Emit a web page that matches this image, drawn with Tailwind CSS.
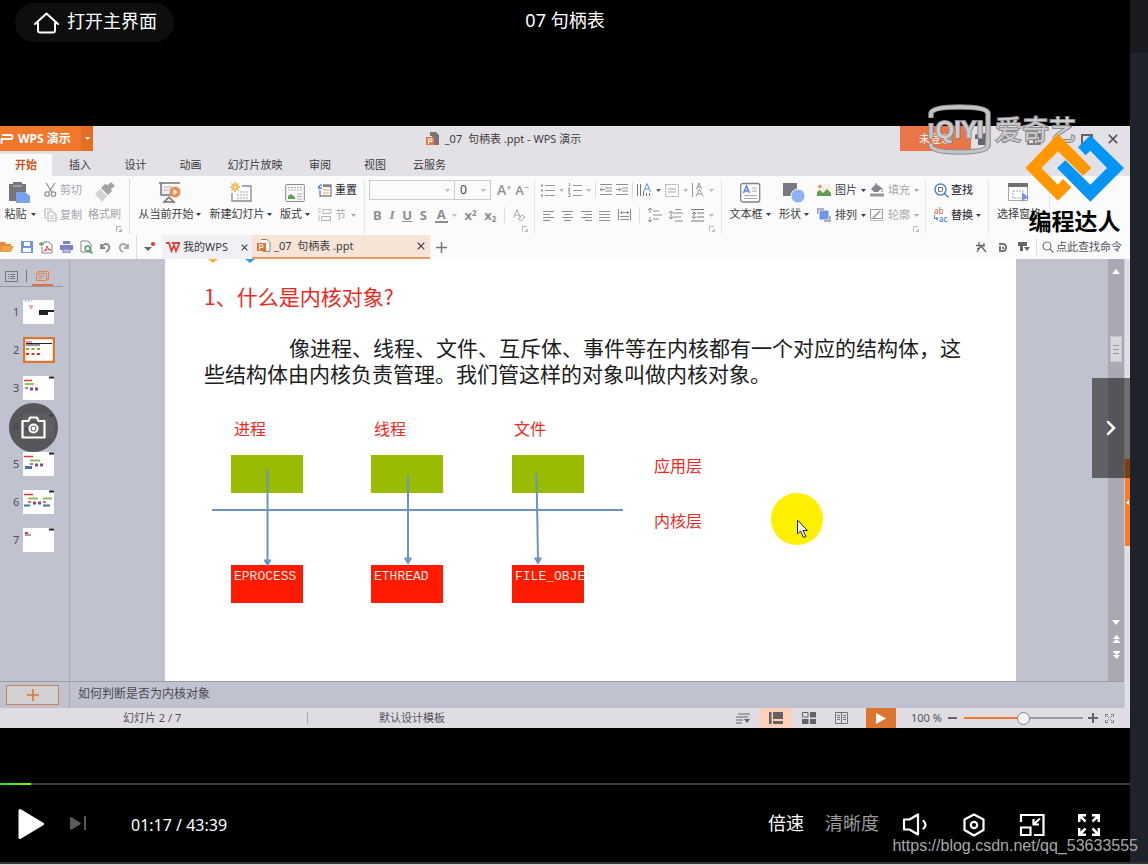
<!DOCTYPE html>
<html lang="zh-CN">
<head>
<meta charset="utf-8">
<meta name="viewport" content="width=device-width, initial-scale=1">
<title>07 句柄表</title>
<script src="https://cdn.jsdelivr.net/npm/@tailwindcss/browser@4"></script>
</head>
<body class="flex min-h-screen flex-col bg-black font-['Noto_Sans','Noto_Sans_CJK_SC',sans-serif]">
<svg width="0" height="0" class="hidden">
  <symbol id="caret" viewBox="0 0 5 3"><path d="M0 0h5L2.5 3z" fill="currentColor"/></symbol>
  <symbol id="launch" viewBox="0 0 6 6"><path d="M.5 5.500V.5H5M3 5.500h2.500V3z" fill="none" stroke="currentColor"/></symbol>
  <symbol id="close" viewBox="0 0 8 8"><path d="M.7.7l6.600 6.600M7.300.7L.7 7.300" fill="none" stroke="currentColor" stroke-width="1.200"/></symbol>
  <symbol id="ppt" viewBox="0 0 14 14"><path d="M4 .5h6l3 3v9H6" fill="#fff" stroke="#8a8580"/><rect x="0" y="4" width="9" height="8" fill="#e2733b"/><path d="M2.500 11V5.800h3.300v2.700H3" fill="none" stroke="#fff"/></symbol>
</svg>

<div class="flex flex-1">
<main class="relative flex min-w-0 flex-1 flex-col bg-black text-white">

  <!-- player header -->
  <header class="relative flex h-[126px] items-start justify-center">
    <button class="absolute left-[15px] top-[3px] flex h-[39px] items-center gap-2 rounded-full bg-[#0e0e0e] pl-[19px] pr-[17px] text-[18px] leading-6">
      <svg width="25" height="22" viewBox="0 0 25 22" class="mt-px" fill="none" stroke="#fff" stroke-width="2" stroke-linejoin="round" stroke-linecap="round"><path d="M1 12L12.500 1.500 24 12M4 11v7.500a2 2 0 0 0 2 2h13a2 2 0 0 0 2-2V11"/></svg>
      <span class="-mt-1">打开主界面</span>
    </button>
    <h1 class="mt-2 text-[18px] leading-6">07 句柄表</h1>
  </header>

  <!-- recorded WPS window -->
  <section class="flex h-[602px] flex-col overflow-hidden bg-[#e3e1e6] text-[11px] leading-4 text-[#3c3c40]">
    <div class="relative flex h-[25px] items-center">
      <button class="flex h-[25px] w-[93px] items-center bg-[#f0772c] text-[12px] font-bold text-white">
        <svg width="14" height="10" viewBox="0 0 14 10" fill="none" stroke="#fff" stroke-width="1.800"><path d="M2 1h8.500q2 0 2 2t-2 2H1.500v5"/></svg>
        <span class="ml-1 w-[63px] text-left">WPS 演示</span>
        <span class="flex h-[25px] w-3 items-center justify-center bg-[#e36f24]"><svg width="5" height="3"><use href="#caret"/></svg></span>
      </button>
      <div class="flex flex-1 items-center justify-center gap-[5px] pr-[10px]"><span class="w-[19px]"></span>
        <svg width="14" height="14" viewBox="0 0 14 14"><path d="M4 0h6l3 3v10H6V4H4z" fill="#77747a"/><rect y="5" width="8" height="8" fill="#ee7b45"/><path d="M2.500 12V7h3.300v2.500H3" fill="none" stroke="#fff"/></svg>
        <span class="whitespace-pre">_07  句柄表 .ppt - WPS 演示</span>
      </div>
      <div class="flex h-full w-[230px] items-center">
        <button class="h-full w-[71px] bg-[#ec7449] pl-[19px] text-left text-white">未登录</button>
        <div class="flex flex-1 items-center justify-between pl-1 pr-3 text-[#66636a]">
          <svg width="13" height="12" viewBox="0 0 13 12"><path d="M4 0L0 2v4h3v6h7V6h3V2L9 0 6.500 2z" fill="#66636a"/></svg>
          <svg width="10" height="10" viewBox="0 0 10 10" fill="none" stroke="#66636a" stroke-width="1.500"><path d="M2 1v8M2 3l6 2-6 2"/></svg>
          <svg width="14" height="12" viewBox="0 0 14 12" fill="none" stroke="#66636a" stroke-width="1.500"><path d="M1 1h12v10H1zM1 3h12M7 10V5M4.500 7L7 5l2.500 2"/></svg>
          <svg width="11" height="10" viewBox="0 0 11 10" stroke="#66636a" stroke-width="1.500"><path d="M0 8h11"/></svg>
          <svg width="12" height="10" viewBox="0 0 12 10" fill="none" stroke="#66636a" stroke-width="2"><path d="M1 1h10v8H1z"/></svg>
          <svg width="10" height="10" class="text-[#55535a]"><use href="#close"/></svg>
        </div>
      </div>
    </div>

    <nav class="flex h-[25px] items-end text-center leading-[22px]">
      <button class="w-[52px] bg-[#fbfbfc] font-bold text-[#c8561c]">开始</button>
      <button class="w-[56px]">插入</button>
      <button class="w-[55px]">设计</button>
      <button class="w-[55px]">动画</button>
      <button class="w-[74px]">幻灯片放映</button>
      <button class="w-[56px]">审阅</button>
      <button class="w-[54px]">视图</button>
      <button class="w-[55px]">云服务</button>
    </nav>

    <!-- ribbon -->
    <div class="flex h-[59px] bg-[#fbfbfc] pt-[3px] pb-px">
      <div class="relative flex w-[130px] gap-2 border-r border-[#dcdbe0] pl-1 pt-[3px]">
        <button class="flex w-8 flex-col items-center gap-[3px]">
          <svg width="22" height="21" viewBox="0 0 22 21"><path d="M0 2h4V0h9v2h4v8H8v9H0z" fill="#77757c"/><path d="M4 4h9" stroke="#c9c8cc"/><path d="M7 10h9l5 4v7H7z" fill="#7ba0ee"/></svg>
          <span class="flex items-center gap-1 whitespace-nowrap">粘贴<svg width="5" height="3"><use href="#caret"/></svg></span>
        </button>
        <div class="flex flex-col gap-[9px] text-[#a4a3a8]">
          <button class="flex items-center gap-[3px]"><svg width="13" height="14" viewBox="0 0 13 14" fill="none" stroke="#96959a" stroke-width="1.300"><path d="M2 0l6 9M11 0L5 9"/><circle cx="3" cy="11" r="2.200"/><circle cx="9.500" cy="11" r="2.200"/></svg>剪切</button>
          <button class="flex items-center gap-[3px]"><svg width="13" height="14" viewBox="0 0 13 14" fill="none" stroke="#bbbac0" stroke-width="1.200"><path d="M3 10H1V1h6v2M4 4h5l3 3v6H4zM6 8h4M6 10.500h4"/></svg>复制</button>
        </div>
        <button class="-ml-[2px] flex flex-col items-center gap-[3px] text-[#a4a3a8]">
          <svg width="22" height="21" viewBox="0 0 22 21"><path d="M17 0l4 4-4 3 1 2-4 4-7-7 4-4 3 1z" fill="#a2a1a6"/><path d="M6 7l7 7-5 6-7-8z" fill="#d3d2d6"/></svg>
          <span>格式刷</span>
        </button>
        <svg width="6" height="6" class="absolute bottom-[2px] right-[7px] text-[#aaa]"><use href="#launch"/></svg>
      </div>

      <div class="flex w-[235px] border-r border-[#e6e5e9] pl-[8px] pt-[3px]">
        <button class="flex w-[63px] flex-col items-center gap-[3px]">
          <svg width="22" height="21" viewBox="0 0 22 21"><path d="M0 1h21M2 1v12h10M5 20l5-5 5 5z" stroke="#75737a" stroke-width="1.500" fill="#75737a" fill-opacity=".1"/><path d="M5 5h8M5 8h5" stroke="#aaa"/><circle cx="16" cy="10" r="5.500" fill="#ee8a55"/><path d="M14.500 7v6l4-3z" fill="#fff"/></svg>
          <span class="flex items-center gap-[2px] whitespace-nowrap">从当前开始<svg width="5" height="3"><use href="#caret"/></svg></span>
        </button>
        <button class="ml-2 flex w-[63px] flex-col items-center gap-[3px]">
          <svg width="22" height="21" viewBox="0 0 22 21"><path d="M12 4h9v15H2V11" fill="none" stroke="#8b898f" stroke-width="1.300"/><path d="M10 10h8M7 13h11M7 16h11" stroke="#aaa" stroke-dasharray="2 1"/><path d="M5 0v10M0 5h10M1.500 1.500l7 7M8.500 1.500l-7 7" stroke="#f5a623" stroke-width="1.300"/><circle cx="5" cy="5" r="2" fill="#fff" stroke="#f5a623"/></svg>
          <span class="flex items-center gap-[2px] whitespace-nowrap">新建幻灯片<svg width="5" height="3"><use href="#caret"/></svg></span>
        </button>
        <button class="ml-2 flex w-[30px] flex-col items-center gap-[3px]">
          <svg width="20" height="21" viewBox="0 0 20 21" fill="none"><rect x=".7" y="2.500" width="18.600" height="17" rx="1" stroke="#8b898f"/><path d="M3 5.500h14M3 8h14" stroke="#aaa" stroke-dasharray="2 1"/><path d="M3 17v-3l3-2 4 3v2z" fill="#6a9a5b"/><path d="M12 12h5M12 14.500h5M12 17h5" stroke="#aaa"/></svg>
          <span class="flex items-center gap-[3px] whitespace-nowrap">版式<svg width="5" height="3"><use href="#caret"/></svg></span>
        </button>
        <div class="ml-2 flex flex-col gap-[9px]">
          <button class="flex items-center gap-[3px] font-medium"><svg width="14" height="14" viewBox="0 0 14 14" fill="none"><path d="M5 2h8v11H2V7" stroke="#86848a" stroke-width="1.300"/><path d="M5 3h8" stroke="#86848a" stroke-width="2"/><path d="M5 7h6M5 10h6" stroke="#e9a36c"/><path d="M1 5q0-3 3-3M0 3l1 2.500L4 5" stroke="#5a86e0" stroke-width="1.300"/></svg>重置</button>
          <button class="flex items-center gap-[3px] text-[#aaa9ae]"><svg width="14" height="14" viewBox="0 0 14 14" fill="none" stroke="#b5b4b9"><path d="M5 1.500h8v4H5zM3.500 8.500h9v4h-9zM0 1h3M0 4h3M1 7v6"/></svg>节<svg width="5" height="3" class="ml-[2px]"><use href="#caret"/></svg></button>
        </div>
      </div>

      <div class="relative flex w-[170px] flex-col gap-[5px] border-r border-[#e6e5e9] pl-1 pt-px text-[#8e8d93]">
        <div class="flex h-5 items-center">
          <label class="relative flex h-5 w-[86px] border border-[#cbcacf]"><input aria-label="字体" class="w-full bg-transparent px-1 outline-none"><svg width="5" height="3" class="absolute right-1 top-2 text-[#bbb]"><use href="#caret"/></svg></label>
          <label class="relative -ml-px flex h-5 w-[37px] border border-[#cbcacf]"><input aria-label="字号" value="0" class="w-full bg-transparent px-[5px] text-[12px] text-[#444] outline-none"><svg width="5" height="3" class="absolute right-1 top-2 text-[#bbb]"><use href="#caret"/></svg></label>
          <button class="ml-[6px] text-[14px] font-medium leading-5">A<sup class="text-[9px]">+</sup></button>
          <button class="ml-[4px] text-[13px] font-medium leading-5">A<sup class="text-[9px]">−</sup></button>
        </div>
        <div class="flex h-5 items-center justify-between pl-1 pr-[9px] text-[13px] leading-5">
          <button class="font-bold">B</button>
          <button class="font-['Liberation_Serif'] font-bold italic">I</button>
          <button class="font-bold underline underline-offset-1">U</button>
          <button class="font-bold">S</button>
          <button class="flex items-center gap-1"><span class="border-b-2 border-[#8e8d93] px-[2px] font-bold leading-[14px]">A</span><svg width="5" height="3" class="text-[#bbb]"><use href="#caret"/></svg></button>
          <button class="font-bold">x<sup class="text-[8px]">2</sup></button>
          <button class="font-bold">x<sub class="text-[8px]">2</sub></button>
          <span class="h-4 w-px bg-[#dcdbe0]"></span>
          <svg width="12" height="13" viewBox="0 0 12 13" fill="none" stroke="#aaa9ae"><path d="M.5 9L4 .5 7.500 9M2 6h4M5 10l4-4 3 2-4 4z"/></svg>
        </div>
        <svg width="6" height="6" class="absolute bottom-[2px] right-[6px] text-[#bbb]"><use href="#launch"/></svg>
      </div>

      <div class="relative flex w-[187px] flex-col gap-[9px] border-r border-[#e6e5e9] pl-[6px] pr-[7px] pt-[3px] text-[#bbb]">
        <div class="flex h-4 items-center justify-between">
          <button aria-label="项目符号" class="flex items-center gap-1"><svg width="14" height="13" viewBox="0 0 14 13" stroke="#98979d" fill="none"><path d="M4 1.500h10M4 6.500h10M4 11.500h10"/><path d="M0 1.500h2M0 6.500h2M0 11.500h2" stroke-width="2"/></svg><svg width="5" height="3"><use href="#caret"/></svg></button>
          <button aria-label="编号" class="flex items-center gap-1"><svg width="14" height="14" viewBox="0 0 14 14" stroke="#98979d" fill="none"><path d="M5 2.500h9M5 7.500h9M5 12.500h9M1.500 0v3M0 5.500h2l-2 2.500h2.500M0 10h2v3.500H0"/></svg><svg width="5" height="3"><use href="#caret"/></svg></button>
          <span class="h-4 w-px bg-[#dcdbe0]"></span>
          <svg width="12" height="12" viewBox="0 0 12 12" stroke="#8e8d93" fill="none"><path d="M0 .5h12M5 4h7M5 7h7M0 10.500h12M5 5.500H0M2 3.500l-2 2 2 2"/></svg>
          <svg width="12" height="12" viewBox="0 0 12 12" stroke="#8e8d93" fill="none"><path d="M0 .5h12M6 4h6M6 7h6M0 10.500h12M0 5.500h5M3 3.500l2 2-2 2"/></svg>
          <span class="h-4 w-px bg-[#dcdbe0]"></span>
          <button aria-label="文字方向" class="flex items-center gap-1 text-[#66646a]"><svg width="15" height="14" viewBox="0 0 15 14" fill="none"><path d="M.5 1v12M3.500 1v12M6.500 9v4M9.500 10v3M12.500 10v3" stroke="#77757b"/><path d="M6.500 9L10 .5 13.500 9M8 6h4" stroke="#6f90dd"/></svg><svg width="5" height="3"><use href="#caret"/></svg></button>
          <button aria-label="对齐文本" class="flex items-center gap-1"><svg width="14" height="13" viewBox="0 0 14 13" stroke="#a5a4a9" fill="none"><path d="M.5.5h13v12H.5z" stroke-dasharray="2 1"/><path d="M3 5h8M3 8h8"/></svg><svg width="5" height="3"><use href="#caret"/></svg></button>
          <button aria-label="字符间距" class="flex items-center gap-1"><svg width="13" height="14" viewBox="0 0 13 14" stroke="#98979d" fill="none"><path d="M.5 0v14M4.500 6L7 0l2.500 6M5.500 4h3M4 13.500L7.500 6l3.500 7.500M5.500 11h4"/></svg><svg width="5" height="3"><use href="#caret"/></svg></button>
        </div>
        <div class="flex h-4 items-center justify-between pl-[2px]">
          <svg width="11" height="11" viewBox="0 0 11 11" stroke="#8e8d93"><path d="M0 1.500h11M0 4.500h7M0 7.500h11M0 10.500h7"/></svg>
          <svg width="11" height="11" viewBox="0 0 11 11" stroke="#8e8d93"><path d="M0 1.500h11M2 4.500h7M0 7.500h11M2 10.500h7"/></svg>
          <svg width="11" height="11" viewBox="0 0 11 11" stroke="#8e8d93"><path d="M0 1.500h11M4 4.500h7M0 7.500h11M4 10.500h7"/></svg>
          <svg width="11" height="11" viewBox="0 0 11 11" stroke="#8e8d93"><path d="M0 1.500h11M0 4.500h11M0 7.500h11M0 10.500h11"/></svg>
          <svg width="13" height="12" viewBox="0 0 13 12" stroke="#8e8d93" fill="none"><path d="M.5 0v11M12.500 0v11M2 3.500h9M4 2L2.500 3.500 4 5M9 2l1.500 1.500L9 5M2 7.500h9M2 10.500h9"/></svg>
          <span class="h-4 w-px bg-[#dcdbe0]"></span>
          <svg width="14" height="14" viewBox="0 0 14 14" stroke="#8e8d93" fill="none"><path d="M5 3h6M5 7h9M5 11h6M2 0v5M0 2l2-2 2 2M2 9v5M0 12l2 2 2-2"/></svg>
          <svg width="14" height="14" viewBox="0 0 14 14" stroke="#8e8d93" fill="none"><path d="M6 1.500h6M4 5h10M4 9h8M6 13h8M2 3v8M0 5l2-2 2 2M0 9l2 2 2-2"/></svg>
          <button aria-label="行距" class="flex items-center gap-1"><svg width="14" height="13" viewBox="0 0 14 13" stroke="#77757b" fill="none"><path d="M0 .5h13M6 4h7M6 8h7M0 12h13M3 3v6M1 5l2-2 2 2M1 7.500l2 2 2-2"/></svg><svg width="5" height="3"><use href="#caret"/></svg></button>
        </div>
        <svg width="6" height="6" class="absolute bottom-[2px] right-[6px] text-[#bbb]"><use href="#launch"/></svg>
      </div>

      <div class="relative flex w-[204px] border-r border-[#e6e5e9] pl-[7px] pt-[3px]">
        <button class="flex w-[42px] flex-col items-center gap-[3px]">
          <svg width="21" height="21" viewBox="0 0 21 21" fill="none"><rect x=".7" y="1.500" width="19" height="18.500" rx="2" stroke="#85838a" stroke-width="1.300"/><path d="M3.500 11L6.500 4l3 7M4.500 9h4" stroke="#5f86de" stroke-width="1.500"/><path d="M12 6h5M12 9h5M4 13.500h13M4 16.500h13" stroke="#aaa"/></svg>
          <span class="flex items-center gap-[3px] whitespace-nowrap">文本框<svg width="5" height="3"><use href="#caret"/></svg></span>
        </button>
        <button class="ml-2 flex w-[30px] flex-col items-center gap-[3px]">
          <svg width="22" height="21" viewBox="0 0 22 21"><path d="M0 1h14v13H0z" fill="#7c7a80"/><circle cx="15" cy="14" r="7" fill="#8fb0f2" stroke="#fbfbfc"/></svg>
          <span class="flex items-center gap-[3px] whitespace-nowrap">形状<svg width="5" height="3"><use href="#caret"/></svg></span>
        </button>
        <div class="ml-2 flex flex-col gap-[9px]">
          <button class="flex items-center gap-1"><svg width="14" height="14" viewBox="0 0 14 14"><path d="M0 1h14v12H0z" fill="#f1efe8"/><path d="M0 13V9l3-2 3 3 4-4 4 4v3z" fill="#659a55"/><circle cx="3" cy="3.500" r="1.500" fill="#e87b45"/></svg>图片<svg width="5" height="3"><use href="#caret"/></svg></button>
          <button class="flex items-center gap-1"><svg width="14" height="14" viewBox="0 0 14 14"><path d="M.7 6V1H7M13 8v5H7" fill="none" stroke="#98979d" stroke-width="1.400"/><rect x="2.500" y="2.500" width="9" height="9" fill="#6f96ec"/></svg>排列<svg width="5" height="3"><use href="#caret"/></svg></button>
        </div>
        <div class="ml-1 flex flex-col gap-[9px] text-[#a9a8ad]">
          <button class="flex items-center gap-1"><svg width="14" height="14" viewBox="0 0 14 14"><path d="M6 1l6 4-4 4H4L1 6z" fill="#86848a"/><path d="M6 0v4M12 5v4" stroke="#86848a"/><path d="M0 12h14" stroke="#98979d" stroke-width="3"/></svg>填充<svg width="5" height="3"><use href="#caret"/></svg></button>
          <button class="flex items-center gap-1"><svg width="14" height="14" viewBox="0 0 14 14" fill="none" stroke="#98979d"><path d="M.5 1.500h12v9H.5z"/><path d="M3 10l7-7" stroke-width="1.600"/><path d="M0 12.500h14" stroke="#bbb"/></svg>轮廓<svg width="5" height="3"><use href="#caret"/></svg></button>
        </div>
        <svg width="6" height="6" class="absolute bottom-[2px] right-[6px] text-[#bbb]"><use href="#launch"/></svg>
      </div>

      <div class="flex w-[63px] flex-col gap-[9px] border-r border-[#e6e5e9] pl-2 pt-[3px]">
        <button class="flex items-center gap-[2px] font-medium"><svg width="15" height="15" viewBox="0 0 15 15" fill="none" stroke="#4a7fd6" stroke-width="1.400"><circle cx="6.500" cy="6.500" r="5.500"/><path d="M10.500 10.500l4 4"/><path d="M4 4.500h4.500V8M4.500 5v3.500H8" stroke="#77757b" stroke-width="1"/></svg>查找</button>
        <button class="flex h-4 items-center gap-[2px] font-medium"><span class="flex w-[15px] flex-col text-left text-[8px] leading-[8px]"><span class="text-[#c07a50]">ab</span><span class="flex text-[#4a7fd6]"><svg width="5" height="6" viewBox="0 0 5 6" fill="none" stroke="#4a7fd6"><path d="M.5 0v3.500H4M2.500 2L4 3.500 2.500 5"/></svg>ac</span></span>替换<svg width="5" height="3" class="ml-px"><use href="#caret"/></svg></button>
      </div>

      <div class="flex w-[61px] justify-center border-r border-[#e6e5e9] pt-[3px]">
        <button class="flex flex-col items-center gap-[3px]">
          <svg width="22" height="21" viewBox="0 0 22 21"><path d="M.5 2.500h19v16H.5z" fill="#fff" stroke="#a5a4a9"/><path d="M0 1h20v4H0z" fill="#737178"/><path d="M5 9h10v7H5z" fill="none" stroke="#a5a4a9" stroke-dasharray="2 1"/><path d="M14 10l7 6-4 1-3 3z" fill="#7e8fe6"/></svg>
          <span>选择窗格</span>
        </button>
      </div>
    </div>

    <!-- quick access and document tabs -->
    <div class="flex h-6 items-center bg-[#fbfbfc]">
      <div class="flex h-full w-[137px] items-center justify-between border-r border-[#dcdbe0] pr-[6px]">
        <svg width="14" height="12" viewBox="0 0 14 12"><path d="M0 1h5l1 2h5v2H3L1 11H0z" fill="#e88a3a"/><path d="M3 5h11l-3 6H0z" fill="#f0a04f"/></svg>
        <svg width="12" height="12" viewBox="0 0 12 12"><path d="M0 0h12v12H0z" fill="#6f96e6"/><path d="M3 1h6v4H3zM2 7h8v4H2z" fill="#fff"/></svg>
        <svg width="14" height="13" viewBox="0 0 14 13" fill="none"><path d="M4 1h6l3 3v8H3V6" stroke="#86848a"/><path d="M5 10q3-2 3-5 1 4 4 4-4-1-7 1" stroke="#dd4a43"/><path d="M0 3h5M2.500 1v4" stroke="#54a04c" stroke-width="1.500"/></svg>
        <svg width="13" height="12" viewBox="0 0 13 12"><path d="M3 0h7v3H3zM0 4h13v5H0z" fill="#8080c4"/><path d="M3 8h7v4H3z" fill="#b8b8e0" stroke="#8080c4"/></svg>
        <svg width="13" height="14" viewBox="0 0 13 14" fill="none"><path d="M1 1h7l3 3v8H1z" stroke="#86848a"/><circle cx="7.500" cy="8.500" r="2.500" stroke="#4f9a61" stroke-width="1.300"/><path d="M9.500 10.500l3 3" stroke="#4f9a61" stroke-width="1.500"/></svg>
        <svg width="12" height="11" viewBox="0 0 12 11" fill="none" stroke="#86848a" stroke-width="1.800"><path d="M2 2v4h4M2 5.500Q6 0 9.500 3 12 7 7 10"/></svg>
        <svg width="12" height="11" viewBox="0 0 12 11" fill="none" stroke="#a3a2a8" stroke-width="1.800"><path d="M10 2v4H6M10 5.500Q6 0 2.500 3 0 7 5 10"/></svg>
      </div>
      <button aria-label="更多" class="flex w-[25px] justify-center"><svg width="11" height="11" viewBox="0 0 11 11"><path d="M0 5h8L4 9z" fill="#66646a"/><circle cx="9" cy="2" r="2" fill="#f0302a"/></svg></button>
      <div class="flex h-full w-[90px] items-center bg-[#f1f0f4] px-1">
        <svg width="14" height="11" viewBox="0 0 14 11" fill="none" stroke="#e0403c" stroke-width="1.800"><path d="M0 1h3l2.500 8L8 3l2 6L13.500 1H6"/></svg>
        <span class="ml-[3px] flex-1 whitespace-nowrap">我的WPS</span>
        <button aria-label="关闭 我的WPS"><svg width="7" height="7"><use href="#close"/></svg></button>
      </div>
      <div class="flex h-full w-[178px] items-center border-b-2 border-[#f09a62] bg-[#f6e5d6] px-[5px]">
        <svg width="14" height="14"><use href="#ppt"/></svg>
        <span class="ml-[3px] flex-1 whitespace-pre">_07  句柄表 .ppt</span>
        <button aria-label="关闭 句柄表"><svg width="8" height="8"><use href="#close"/></svg></button>
      </div>
      <button aria-label="新建标签" class="ml-[6px]"><svg width="11" height="11" viewBox="0 0 11 11" stroke="#77757b" stroke-width="1.500"><path d="M0 5.500h11M5.500 0v11"/></svg></button>
      <div class="ml-auto flex items-center gap-[10px] pr-2 text-[#77757b]">
        <svg width="11" height="11" viewBox="0 0 11 11" fill="none" stroke="#66646a" stroke-width="1.300"><path d="M3 0v3M0 3.500h8M1 10l4-6 5 6M8 1v4M5 5l-4 2"/></svg>
        <svg width="9" height="9" viewBox="0 0 9 9" class="ml-px" fill="none" stroke="#77757b" stroke-width="2"><path d="M1 1h4q3 0 3 3.500T5 8H2V3M4 5h2"/></svg>
        <svg width="12" height="10" viewBox="0 0 12 10" class="ml-px"><path d="M0 0h9v4H5v5H2V4H0zM6 5h6L9 9z" fill="#66646a"/></svg>
        <button class="-ml-1 flex items-center gap-[2px] border-l border-[#dcdbe0] pl-[5px] text-[#55535a]"><svg width="12" height="12" viewBox="0 0 12 12" fill="none" stroke="#77757b" stroke-width="1.200"><circle cx="5" cy="5" r="4"/><path d="M8 8l3.500 3.500"/></svg>点此查找命令</button>
      </div>
    </div>

    <!-- editor -->
    <div class="flex min-h-0 flex-1">
      <div class="flex min-w-0 flex-1 flex-col">
        <div class="flex min-h-0 flex-1 bg-[#c0c2cf]">
          <aside class="w-[70px] border-r border-[#a8a9b8]">
            <div class="mr-[6px] flex h-[28px] items-end border-b border-[#9798a6]">
              <svg width="13" height="11" viewBox="0 0 13 11" class="mb-1 ml-[5px]" fill="none" stroke="#77767f"><path d="M.5.5h12v10H.5zM3 3.500h1M5 3.500h5M3 5.500h1M5 5.500h5M3 7.500h1M5 7.500h5"/></svg>
              <span class="mb-1 ml-2 h-3 w-px bg-[#77767f]"></span>
              <span class="ml-[5px] border-b-2 border-[#e0733a] px-1 pb-[3px]"><svg width="13" height="10" viewBox="0 0 13 10" fill="none" stroke="#e8804a"><path d="M.5 2.500h10v7H.5zM2 2V.5h10.500V8H11M2.500 5h6M2.500 7h4"/></svg></span>
            </div>
            <ol class="mt-[13px] flex flex-col gap-[14px] text-[#505058]">
              <li class="flex h-6 items-center gap-1 pl-[13px]"><span class="w-[6px]">1</span><svg width="31" height="24" viewBox="0 0 31 24"><path d="M0 0h31v24H0z" fill="#fff"/><path d="M2 1h7" stroke="#8aa" stroke-dasharray="2 1"/><path d="M6 6h4M7 8h2" stroke="#d6504a"/><path d="M16 10h15v2h-6v3h-9z" fill="#222"/></svg></li>
              <li class="flex h-6 items-center gap-1 pl-[13px]"><span class="w-[6px]">2</span><svg width="32" height="26" viewBox="0 0 32 26"><path d="M1 1h30v24H1z" fill="#fff" stroke="#dd7430" stroke-width="2.500"/><path d="M3 5h6" stroke="#e33"/><path d="M3 6.500h26M3 8h14" stroke="#222"/><path d="M3 12h15" stroke="#8fb31a" stroke-width="2" stroke-dasharray="3 2.500"/><path d="M3 17h15" stroke="#f02a20" stroke-width="2" stroke-dasharray="3 2.500"/></svg></li>
              <li class="flex h-6 items-center gap-1 pl-[13px]"><span class="w-[6px]">3</span><svg width="31" height="24" viewBox="0 0 31 24"><path d="M0 0h31v24H0z" fill="#fff"/><path d="M26 1.500h5" stroke="#222" stroke-width="2"/><path d="M1 4.500h8M2 12h3" stroke="#e33" stroke-width="1.500"/><path d="M2 8h9" stroke="#8fbf5a" stroke-width="2"/><path d="M7 13h8" stroke="#814a9a" stroke-width="3" stroke-dasharray="3 2"/></svg></li>
              <li class="flex h-6 items-center gap-1 pl-[13px]"><span class="w-[6px]">4</span><svg width="31" height="24" viewBox="0 0 31 24"><path d="M0 0h31v24H0z" fill="#fff"/><path d="M26 1.500h5" stroke="#222" stroke-width="2"/><path d="M6 8h9" stroke="#8fbf5a" stroke-width="2"/><path d="M2 15h4" stroke="#3a66b0" stroke-width="3"/></svg></li>
              <li class="flex h-6 items-center gap-1 pl-[13px]"><span class="w-[6px]">5</span><svg width="31" height="24" viewBox="0 0 31 24"><path d="M0 0h31v24H0z" fill="#fff"/><path d="M26 1.500h5" stroke="#222" stroke-width="2"/><path d="M1 4.500h9M7 12h3" stroke="#e33" stroke-width="1.500"/><path d="M7 8.500h10" stroke="#8fbf5a" stroke-width="2"/><path d="M12 13h8" stroke="#814a9a" stroke-width="3" stroke-dasharray="3 2"/><path d="M2 15.500h7" stroke="#3a76b0" stroke-width="3"/></svg></li>
              <li class="flex h-6 items-center gap-1 pl-[13px]"><span class="w-[6px]">6</span><svg width="31" height="24" viewBox="0 0 31 24"><path d="M0 0h31v24H0z" fill="#fff"/><path d="M26 1.500h5" stroke="#222" stroke-width="2"/><path d="M1 4.500h9M5 12h3M20 12h3" stroke="#e33" stroke-width="1.500"/><path d="M5 8.500h10M20 8.500h9" stroke="#8fbf5a" stroke-width="2"/><path d="M10 13h8" stroke="#814a9a" stroke-width="3" stroke-dasharray="3 2"/><path d="M1 15.500h6M20 15.500h7" stroke="#3a76b0" stroke-width="2"/></svg></li>
              <li class="flex h-6 items-center gap-1 pl-[13px]"><span class="w-[6px]">7</span><svg width="31" height="24" viewBox="0 0 31 24"><path d="M0 0h31v24H0z" fill="#fff"/><path d="M26 1.500h5" stroke="#222" stroke-width="2"/><path d="M2 5h3" stroke="#e33" stroke-width="2"/><path d="M2 7h6" stroke="#444"/></svg></li>
            </ol>
          </aside>

          <div class="flex flex-1 pl-[95px] pr-[92px]">
            <article class="relative flex-1 overflow-hidden bg-white px-[39px] pt-6 font-['Noto_Sans_CJK_SC',sans-serif] text-[21px] leading-[26px] text-[#1c1c1c]">
              <svg width="50" height="4" viewBox="0 0 50 4" class="absolute left-[43px] top-0"><path d="M0 0h10L5 4z" fill="#f7b04a"/><path d="M37 0h10l-5 4z" fill="#2f9ae6"/></svg>
              <h2 class="text-[#f0281e]">1、什么是内核对象?</h2>
              <p class="mt-[25px] indent-[85px]">像进程、线程、文件、互斥体、事件等在内核都有一个对应的结构体，这些结构体由内核负责管理。我们管这样的对象叫做内核对象。</p>
              <figure class="relative mt-[2px] h-[240px] text-[16px] leading-6 text-[#f0281e]">
                <span class="absolute left-[30px] top-[28px]">进程</span>
                <span class="absolute left-[170px] top-[28px]">线程</span>
                <span class="absolute left-[310px] top-[28px]">文件</span>
                <span class="absolute left-[450px] top-[65px]">应用层</span>
                <span class="absolute left-[450px] top-[120px]">内核层</span>
                <div class="absolute left-[27px] top-[67px] h-[38px] w-[72px] bg-[#99bb00]"></div>
                <div class="absolute left-[167px] top-[67px] h-[38px] w-[72px] bg-[#99bb00]"></div>
                <div class="absolute left-[308px] top-[67px] h-[38px] w-[72px] bg-[#99bb00]"></div>
                <div class="absolute left-[27px] top-[177px] h-[38px] w-[72px] overflow-hidden bg-[#ff1a00] pl-[3px] font-['Liberation_Mono',monospace] text-[13px] text-[#ffe9e4]">EPROCESS</div>
                <div class="absolute left-[167px] top-[177px] h-[38px] w-[72px] overflow-hidden bg-[#ff1a00] pl-[3px] font-['Liberation_Mono',monospace] text-[13px] text-[#ffe9e4]">ETHREAD</div>
                <div class="absolute left-[308px] top-[177px] h-[38px] w-[72px] overflow-hidden bg-[#ff1a00] pl-[3px] font-['Liberation_Mono',monospace] text-[13px] text-[#ffe9e4]">FILE_OBJE</div>
                <svg width="430" height="190" viewBox="0 0 430 190" class="absolute left-0 top-0" fill="#6c94c2" stroke="#6c94c2" stroke-width="2"><path d="M8 122h411M63.500 81v92M204 87v84M332.500 85l1.500 86" fill="none"/><path d="M60 172h7l-3.500 6zM200.500 170h7l-3.500 6zM330.500 170h7l-3.500 6z" stroke-width="1"/></svg>
                <svg width="52" height="52" viewBox="0 0 52 52" class="absolute left-[567px] top-[105px]"><circle cx="26" cy="26" r="26" fill="#fff000"/><path d="M26.500 27v14l3-3 3 6.500 2.500-1-3-6h4.500z" fill="#fff" stroke="#222"/></svg>
              </figure>
            </article>
          </div>

          <div class="flex w-4 flex-col items-center bg-[#a9a8b3] pt-[10px] pb-[22px]">
            <svg width="8" height="5" viewBox="0 0 8 5"><path d="M0 5h8L4 0z" fill="#fff"/></svg>
            <div class="mt-[62px] flex h-[26px] w-3 flex-col items-center justify-center gap-[3px] border border-[#c6c5cc] bg-[#d8d7dd]"><span class="h-px w-[6px] bg-[#99989f]"></span><span class="h-px w-[6px] bg-[#99989f]"></span><span class="h-px w-[6px] bg-[#99989f]"></span></div>
            <svg width="8" height="5" viewBox="0 0 8 5" class="mt-auto"><path d="M0 0h8L4 5z" fill="#fff"/></svg>
            <svg width="7" height="8" viewBox="0 0 7 8" class="mt-[10px]"><path d="M0 4h7L3.500 0zM0 7h7v1H0zM0 7h7L3.500 4z" fill="#fff"/></svg>
            <svg width="7" height="8" viewBox="0 0 7 8" class="mt-2"><path d="M0 4h7L3.500 8zM0 0h7v1H0zM0 1h7L3.500 4z" fill="#fff"/></svg>
          </div>
        </div>
        <div class="flex h-[27px] items-stretch border-t border-[#9b9caa] bg-[#c1c2cf]">
          <div class="w-[70px] border-r border-[#a8a9b8] pl-[6px] pt-[3px]">
            <button aria-label="新建幻灯片" class="flex h-5 w-[53px] items-center justify-center border border-[#cf8352] bg-[#d2d0d3]"><svg width="12" height="12" viewBox="0 0 12 12" stroke="#dd7430" stroke-width="1.500"><path d="M0 6h12M6 0v12"/></svg></button>
          </div>
          <p class="pl-2 text-[12px] leading-6 text-[#4a4a52]">如何判断是否为内核对象</p>
        </div>
      </div>
      <div class="flex w-[6px] flex-col border-l border-[#cfced5] bg-[#e0dfe4]">
        <button aria-label="展开侧栏" class="mt-[200px] flex h-[87px] w-full items-center justify-center bg-[#f97b22]"><svg width="3" height="5" viewBox="0 0 3 5"><path d="M3 0v5L0 2.500z" fill="#fff"/></svg></button>
      </div>
    </div>

    <!-- status bar -->
    <footer class="flex h-5 items-center bg-[#dfdde2] text-[#55535a]">
      <span class="w-[185px] pl-[123px] whitespace-nowrap">幻灯片 2 / 7</span>
      <span class="ml-[122px] h-3 w-px bg-[#a9a8b0]"></span>
      <span class="ml-[71px]">默认设计模板</span>
      <div class="ml-auto flex h-full items-center pr-4">
        <svg width="14" height="11" viewBox="0 0 14 11" stroke="#66646a" fill="none"><path d="M2 1h12M0 4h12M0 7h7M0 10h6"/><path d="M8 6h6l-3 4z" fill="#66646a" stroke="none"/></svg>
        <button aria-label="普通视图" class="ml-[10px] flex h-full w-8 items-center justify-center bg-[#fdd0bb]"><svg width="14" height="12" viewBox="0 0 14 12" fill="#66605f"><path d="M0 0h2.500v12H0zM4 0h10v7H4zM4 9h10v3H4z"/></svg></button>
        <svg width="14" height="12" viewBox="0 0 14 12" class="ml-[10px]" fill="#66646a"><path d="M8 0h6v5.500H8zM0 7h6.500v5H0zM8 7h6v5H8z"/><path d="M.5.5H6V5H.5z" fill="none" stroke="#66646a"/></svg>
        <svg width="13" height="12" viewBox="0 0 13 12" class="ml-[19px]" fill="none" stroke="#77757b"><path d="M.5.5h12v11H.5zM6.500 0v12M2 3.500h3M2 5.500h3M2 7.500h3M8 3.500h3M8 5.500h3M8 7.500h3"/></svg>
        <button aria-label="放映" class="ml-[18px] flex h-full w-[30px] items-center justify-center bg-[#dd7430]"><svg width="10" height="11" viewBox="0 0 10 11"><path d="M0 0l10 5.500L0 11z" fill="#fff"/></svg></button>
        <span class="ml-[15px] w-[32px] whitespace-nowrap">100 %</span>
        <svg width="9" height="2" class="ml-[5px] bg-[#66646a]"></svg>
        <input type="range" aria-label="缩放" min="0" max="100" value="50" class="ml-[7px] h-[2px] w-[119px] appearance-none bg-linear-to-r from-[#f0772c] from-50% to-[#99989f] to-50% [&::-webkit-slider-thumb]:h-[13px] [&::-webkit-slider-thumb]:w-[13px] [&::-webkit-slider-thumb]:appearance-none [&::-webkit-slider-thumb]:rounded-full [&::-webkit-slider-thumb]:border [&::-webkit-slider-thumb]:border-[#88868d] [&::-webkit-slider-thumb]:bg-[#f5f4f7]">
        <svg width="10" height="10" viewBox="0 0 10 10" class="ml-[5px]" stroke="#66646a" stroke-width="2"><path d="M0 5h10M5 0v10"/></svg>
        <svg width="9" height="9" viewBox="0 0 9 9" class="ml-[7px]" fill="none" stroke="#77757b"><path d="M.5 3V.5H3M6 .5h2.500V3M8.500 6v2.500H6M3 8.500H.5V6M2 2l1.500 1.500M7 2L5.500 3.500M2 7l1.500-1.500M7 7L5.500 5.500"/></svg>
      </div>
    </footer>
  </section>

  <!-- progress and controls -->
  <div role="progressbar" aria-label="播放进度" class="mt-[55px] h-[2px] bg-[#3d3d3d]"><div class="h-full bg-linear-to-r from-[#16e01c] to-[#6fff00]" style="width:2.75%"></div></div>
  <div class="flex flex-1 items-start pt-[23px]">
    <button aria-label="播放" class="ml-[18px] mt-px"><svg width="26" height="30" viewBox="0 0 26 30"><path d="M2 1.500L24.500 15 2 28.500z" fill="#fff" stroke="#fff" stroke-width="3" stroke-linejoin="round"/></svg></button>
    <button aria-label="下一集" class="ml-[26px] mt-2"><svg width="17" height="15" viewBox="0 0 17 15" fill="#5a5a5a"><path d="M0 2q0-1.500 1.500-.7l9 5.400q1 .8 0 1.600l-9 5.400Q0 14 0 12.500zM14 0h2v14h-2z"/></svg></button>
    <span class="ml-[44px] mt-[5px] text-[16px] leading-6">01:17 / 43:39</span>
    <div class="ml-auto flex items-start pr-[30px] text-[18px] leading-6">
      <button class="mt-[3px]">倍速</button>
      <button class="ml-[21px] mt-[3px] text-[#9c9c9c]">清晰度</button>
      <button aria-label="音量" class="ml-[23px] mt-[5px]"><svg width="27" height="24" viewBox="0 0 27 24" fill="none" stroke="#fff" stroke-width="2.200" stroke-linejoin="round" stroke-linecap="round"><path d="M2 6.500h5.500L16 1.500v20l-8.500-5H2zM21.500 8q4 3.500 0 7.500"/></svg></button>
      <button aria-label="设置" class="ml-[34px] mt-[5px]"><svg width="22" height="24" viewBox="0 0 22 24" fill="none" stroke="#fff" stroke-width="2.200" stroke-linejoin="round"><path d="M11 1.500l9.500 5v10.500L11 22.500 1.500 17V6.500z"/><circle cx="11" cy="12" r="3.200"/></svg></button>
      <button aria-label="小窗播放" class="ml-[34px] mt-[5px]"><svg width="26" height="24" viewBox="0 0 26 24" fill="none" stroke="#fff" stroke-width="2.200"><path d="M2 9V2h22.500v20H15M2 14.500h9.500V22H2zM21 5.500l-6.500 6M14.500 6v5.500H20"/></svg></button>
      <button aria-label="全屏" class="ml-[33px] mt-[6px]"><svg width="22" height="22" viewBox="0 0 22 22" fill="none" stroke="#fff" stroke-width="2.500"><path d="M1.200 8V1.200H8M1.500 1.500L7.500 7.500M14 1.200h6.800V8M20.500 1.500L14.500 7.500M20.800 14v6.800H14M20.500 20.500L14.500 14.500M8 20.800H1.200V14M1.500 20.500L7.500 14.500"/></svg></button>
    </div>
  </div>

  <!-- overlays on the video -->
  <div class="pointer-events-none absolute right-[54px] top-[104px] flex items-center gap-1 [paint-order:stroke] [-webkit-text-stroke:2px_#8c8a8d]">
    <span class="relative flex h-[51px] w-[63px] items-center justify-center">
      <svg width="63" height="51" viewBox="0 0 63 51" class="absolute inset-0" fill="none"><path id="badge" d="M3 14V9Q5 3 31.500 3T60 9v33q-2 6-28.500 6T3 42v-3M3 19v16" stroke="#8c8a8d" stroke-width="5.500"/><use href="#badge" class="hidden"/><path d="M3 13.500V9Q5 3 31.500 3T60 9v33q-2 6-28.500 6T3 42v-2.500M3 19.500v15" stroke="#c4c3c6" stroke-width="3.500"/></svg>
      <span class="font-['Liberation_Sans',sans-serif] text-[24px] font-bold leading-6 text-[#cccbce]">QIYI</span>
    </span>
    <span class="text-[27px] leading-8 text-[#cccbce]">爱奇艺</span>
  </div>
  <div class="pointer-events-none absolute right-[6px] top-[134px] flex flex-col items-center font-['Noto_Sans_CJK_SC',sans-serif] text-[23px] font-bold leading-9 text-black">
    <svg width="99" height="68" viewBox="526 133 297 204"><path d="M725 235L625 133 527 235l98 98 40-40-25-25-15 17-50-50 50-50 75 73z" fill="#ff9700"/><path d="M622 235l100 101 101-101-101-98-37 36 23 24 14-14 50 52-50 50-75-73z" fill="#0795f4"/></svg>
    <span>编程达人</span>
  </div>
  <button aria-label="截图" class="absolute left-[9px] top-[403px] flex h-[49px] w-[49px] items-center justify-center rounded-full bg-[#434347]/85"><svg width="25" height="23" viewBox="0 0 25 23" fill="none" stroke="#fff" stroke-width="2.200" stroke-linejoin="round"><path d="M1.500 5h6l1.500-3.500h7L17.500 5h6v16.500h-22z"/><circle cx="12.500" cy="12.500" r="4"/><circle cx="12.500" cy="12.500" r=".8"/></svg></button>
  <button aria-label="展开选集" class="absolute right-0 top-[378px] flex h-[100px] w-[38px] items-center justify-center bg-black/50"><svg width="10" height="16" viewBox="0 0 10 16" fill="none" stroke="#fff" stroke-width="2.500" stroke-linecap="round"><path d="M2 2l6 6-6 6"/></svg></button>
</main>

<aside class="flex w-[18px] flex-col bg-[#1e222b]"><div class="h-[53px] bg-[#1a1b20]"></div></aside>
</div>
<div class="h-[3px] border-t-2 border-[#333] bg-[#d8d4cf]"></div>
<a href="https://blog.csdn.net/qq_53633555" class="absolute right-[10px] top-[836px] font-['Liberation_Sans',sans-serif] text-[16px] leading-5 text-[#a9a9a9]">https://blog.csdn.net/qq_53633555</a>
</body>
</html>
